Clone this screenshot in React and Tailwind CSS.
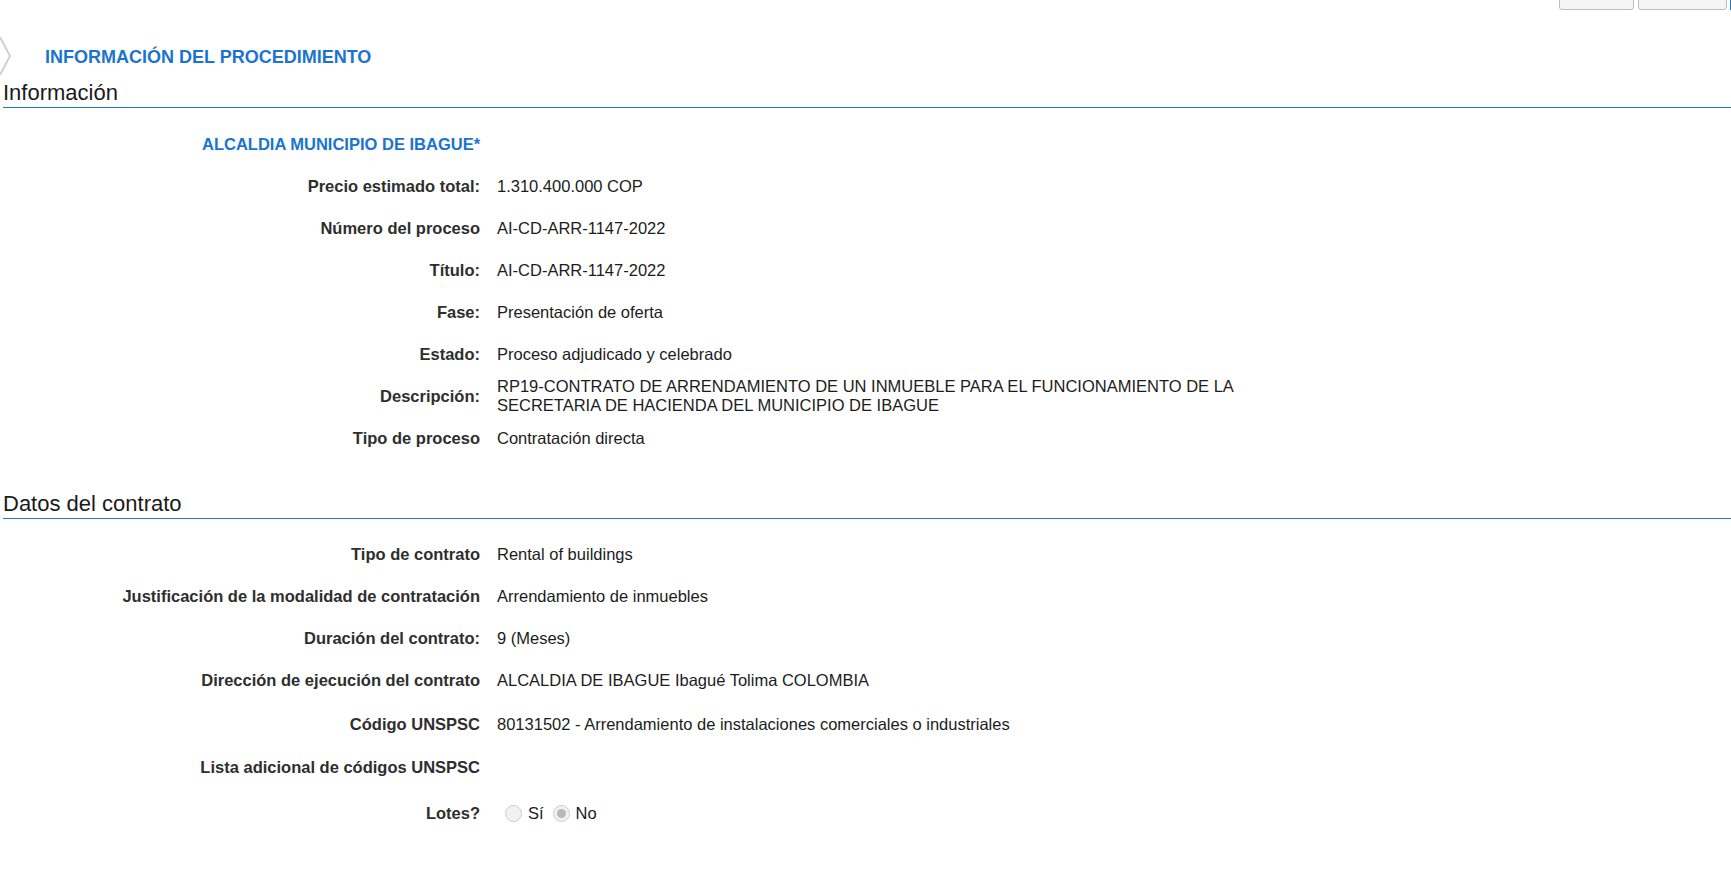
import React from "react";

function Row({ label, children, h = "h-[42px]" }) {
  return (
    <div className={`grid grid-cols-[480px_1fr] items-center ${h}`}>
      <div className="text-right font-bold text-[16.5px] leading-[19px] text-[#2e2e2e] whitespace-nowrap">{label}</div>
      <div className="pl-[17px] text-[16.5px] leading-[19px] text-[#1c1c1c]">{children}</div>
    </div>
  );
}

function Radio({ checked }) {
  return (
    <span className="inline-flex shrink-0 items-center justify-center w-[17px] h-[17px] rounded-full border border-[#cdcdcd] bg-[#f1f1f1]">
      {checked && <span className="w-[9px] h-[9px] rounded-full bg-[#b9b9b9]" />}
    </span>
  );
}

function SectionTitle({ children, className = "" }) {
  return (
    <div className={`ml-[3px] pt-[5px] pb-[1px] border-b border-[#1f7bc6] text-[22px] leading-[26px] text-[#1a1a1a] ${className}`}>
      {children}
    </div>
  );
}

export default function App() {
  return (
    <div className="w-[1731px] h-[874px] bg-white overflow-hidden font-['Liberation_Sans',Arial,sans-serif]">
      {/* top buttons (cut off) */}
      <div className="flex justify-end items-start h-[10px] overflow-hidden">
        <div className="w-[75px] h-[30px] -mt-[20px] shrink-0 border border-[#bdbdbd] rounded-[3px] bg-[#f5f5f5]" />
        <div className="w-[89px] h-[30px] -mt-[20px] ml-[4px] shrink-0 border border-[#bdbdbd] rounded-[3px] bg-[#f5f5f5]" />
        <div className="w-[1px] h-[10px] shrink-0 bg-[#1f7bc6] ml-[3px]" />
      </div>

      {/* header */}
      <div className="flex items-center h-[38px] mt-[27px]">
        <svg width="11" height="38" viewBox="0 0 11 38" className="shrink-0">
          <polyline points="0,0 10,19 0,38" fill="none" stroke="#d0d0d0" strokeWidth="2" />
        </svg>
        <div className="ml-[34px] mt-[3px] text-[18px] font-bold text-[#1a73d1]">INFORMACIÓN DEL PROCEDIMIENTO</div>
      </div>

      <SectionTitle>Información</SectionTitle>

      <div className="mt-[15px]">
        <div className="h-[42px] flex items-center pl-[202px] text-[16.5px] font-bold text-[#1a73d1]">
          ALCALDIA MUNICIPIO DE IBAGUE*
        </div>
        <Row label="Precio estimado total:">1.310.400.000 COP</Row>
        <Row label="Número del proceso">AI-CD-ARR-1147-2022</Row>
        <Row label="Título:">AI-CD-ARR-1147-2022</Row>
        <Row label="Fase:">Presentación de oferta</Row>
        <Row label="Estado:">Proceso adjudicado y celebrado</Row>
        <Row label="Descripción:">
          <div className="max-w-[780px]">
            RP19-CONTRATO DE ARRENDAMIENTO DE UN INMUEBLE PARA EL FUNCIONAMIENTO DE LA SECRETARIA DE HACIENDA DEL MUNICIPIO DE IBAGUE
          </div>
        </Row>
        <Row label="Tipo de proceso">Contratación directa</Row>
      </div>

      <SectionTitle className="mt-[27px]">Datos del contrato</SectionTitle>

      <div className="mt-[14px]">
        <Row label="Tipo de contrato">Rental of buildings</Row>
        <Row label="Justificación de la modalidad de contratación">Arrendamiento de inmuebles</Row>
        <Row label="Duración del contrato:">9 (Meses)</Row>
        <Row label="Dirección de ejecución del contrato">ALCALDIA DE IBAGUE Ibagué Tolima COLOMBIA</Row>
        <Row label="Código UNSPSC" h="h-[46px]">80131502 - Arrendamiento de instalaciones comerciales o industriales</Row>
        <Row label="Lista adicional de códigos UNSPSC" h="h-[40px]"></Row>
        <Row label="Lotes?" h="h-[52px]">
          <div className="flex items-center pl-[8px]">
            <Radio />
            <span className="ml-[6px]">Sí</span>
            <span className="ml-[9px] flex"><Radio checked /></span>
            <span className="ml-[6px]">No</span>
          </div>
        </Row>
      </div>
    </div>
  );
}
